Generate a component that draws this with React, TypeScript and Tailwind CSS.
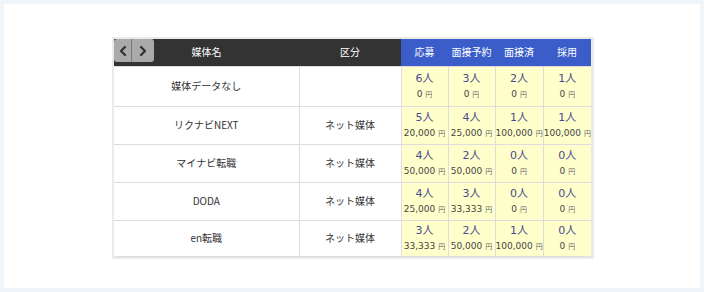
import { ChevronLeft, ChevronRight } from "lucide-react";

type Stat = { n: number; yen: string };
type Row = { name: string; kind: string; h: string; stats: Stat[] };

const ROWS: Row[] = [
  { name: "媒体データなし", kind: "", h: "h-[40px]", stats: [{ n: 6, yen: "0" }, { n: 3, yen: "0" }, { n: 2, yen: "0" }, { n: 1, yen: "0" }] },
  { name: "リクナビNEXT", kind: "ネット媒体", h: "h-[38px]", stats: [{ n: 5, yen: "20,000" }, { n: 4, yen: "25,000" }, { n: 1, yen: "100,000" }, { n: 1, yen: "100,000" }] },
  { name: "マイナビ転職", kind: "ネット媒体", h: "h-[38px]", stats: [{ n: 4, yen: "50,000" }, { n: 2, yen: "50,000" }, { n: 0, yen: "0" }, { n: 0, yen: "0" }] },
  { name: "DODA", kind: "ネット媒体", h: "h-[38px]", stats: [{ n: 4, yen: "25,000" }, { n: 3, yen: "33,333" }, { n: 0, yen: "0" }, { n: 0, yen: "0" }] },
  { name: "en転職", kind: "ネット媒体", h: "h-[36px]", stats: [{ n: 3, yen: "33,333" }, { n: 2, yen: "50,000" }, { n: 1, yen: "100,000" }, { n: 0, yen: "0" }] },
];

const STAT_HEADS = ["応募", "面接予約", "面接済", "採用"];
const FONT = { fontFamily: '"Noto Sans CJK JP", "Noto Sans", sans-serif' };
const NUM_FONT = { fontFamily: '"DejaVu Sans", "Noto Sans CJK JP", sans-serif' };

export default function App() {
  return (
    <div className="w-[704px] h-[292px] bg-[#f0f5fa] p-1" style={FONT}>
      <div className="h-[284px] bg-white pl-[108px] pt-[33px]">
        <div className="inline-block border-2 border-r-[3px] border-[#ebebeb]">
          <table className="border-collapse table-fixed text-[10px] leading-none text-[#333]">
            <colgroup>
              <col className="w-[185px]" />
              <col className="w-[102px]" />
              <col className="w-[47px]" />
              <col className="w-[47px]" />
              <col className="w-[47px]" />
              <col className="w-[46px]" />
            </colgroup>
            <thead>
              <tr className="h-[27px] text-white">
                <th className="relative bg-[#333] font-normal">
                  {/* page arrows */}
                  <div className="absolute left-0 top-0 flex h-[23px] overflow-hidden rounded-[3px] bg-[#aaa]">
                    <button className="flex w-[18px] items-center justify-center border-r border-[#777] text-[#333]">
                      <ChevronLeft size={16} strokeWidth={3.5} />
                    </button>
                    <button className="flex w-[22px] items-center justify-center text-[#333]">
                      <ChevronRight size={16} strokeWidth={3.5} />
                    </button>
                  </div>
                  媒体名
                </th>
                <th className="bg-[#333] font-normal">区分</th>
                {STAT_HEADS.map((h) => (
                  <th key={h} className="bg-[#3a5dc9] font-normal whitespace-nowrap">
                    {h}
                  </th>
                ))}
              </tr>
            </thead>
            <tbody>
              {ROWS.map((r) => (
                <tr key={r.name} className={r.h}>
                  <td className="border border-l-0 border-[#ddd] text-center">{r.name}</td>
                  <td className="border border-[#ddd] text-center">{r.kind}</td>
                  {r.stats.map((s, i) => (
                    <td
                      key={i}
                      className="border border-[#ddd] bg-[#ffffcc] text-center whitespace-nowrap overflow-visible last:border-r-0"
                    >
                      <div className="text-[11px] leading-[14px] text-[#4b4b8c]" style={NUM_FONT}>
                        {s.n}人
                      </div>
                      <div className="mt-[2px] text-[9px] leading-[12px] text-[#444]" style={NUM_FONT}>
                        {s.yen}
                        <span className="ml-[3px] text-[7px] text-[#666]">円</span>
                      </div>
                    </td>
                  ))}
                </tr>
              ))}
            </tbody>
          </table>
        </div>
      </div>
    </div>
  );
}
